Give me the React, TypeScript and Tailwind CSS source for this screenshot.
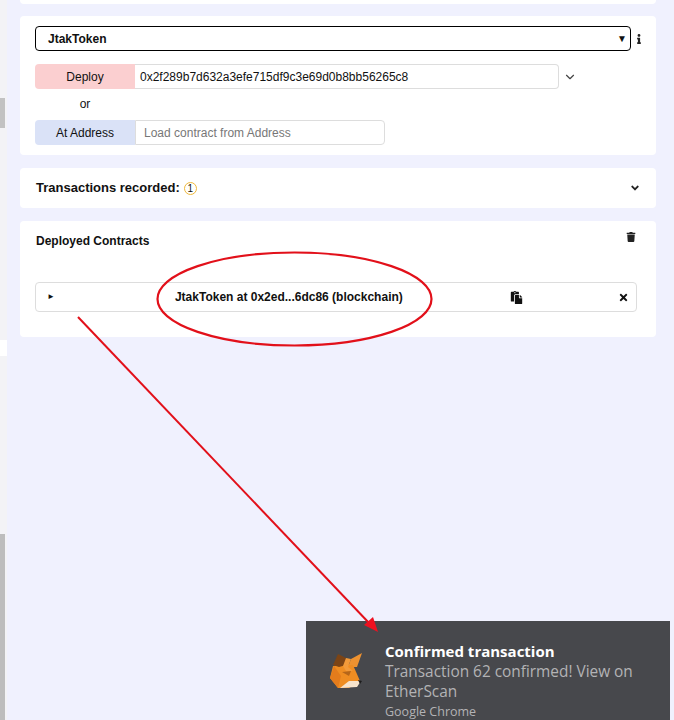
import { ChevronDown } from 'lucide-react';
import { FaAngleDown, FaInfo, FaPaste, FaTimes, FaTrash } from 'react-icons/fa';

function Fox() {
  return (
    <svg width="34" height="38" viewBox="0 0 34 38" className="shrink-0">
      <polygon points="33,2 22,8 19,16 28,16" fill="#ee9230" />
      <polygon points="4,15 16,14 24,14 31,30 20,37 9,37 1,27" fill="#ef8d22" />
      <polygon points="4,14 9,3 17,7 17,14 10,16" fill="#7c4415" />
      <polygon points="1,27 5,15 12,25 9,37" fill="#e47c1c" />
      <polygon points="17,7 22,8 19,16 24,20 17,20 14,15" fill="#f29a3a" />
      <polygon points="13,21 22,20 20,25" fill="#b5661a" />
      <polygon points="11,37 20,30 32,30 28,36" fill="#f6e3cc" />
      <polygon points="29,29 33,30 31,33" fill="#1c1c1c" />
    </svg>
  );
}

export default function App() {
  return (
    <div className="relative h-[720px] w-[674px] overflow-hidden bg-[#f0f1fe] font-['Liberation_Sans',Arial,sans-serif] text-[12px] text-[#111]">
      {/* Left edge of the next window */}
      <div className="absolute left-0 top-0 h-full w-[7px] bg-[#f3f3f6]">
        <div className="mt-[98px] h-[30px] w-[5px] bg-[#c2c2c2]" />
        <div className="mt-[212px] h-4 bg-white" />
        <div className="mt-[178px] h-[186px] w-[5px] bg-[#bdbdbd]" />
      </div>

      <div className="ml-5 flex w-[636px] flex-col">
        <div className="h-1 rounded-b bg-white" />

        {/* Contract select + deploy */}
        <section className="mt-3 h-[139px] rounded bg-white pl-[15px] pt-2.5">
          <div className="flex items-center">
            <div className="flex h-[25px] w-[596px] items-center justify-between rounded border border-black pl-[12px] pr-[3px] font-bold">
              <span>JtakToken</span>
              <span className="text-[10px] leading-none">▼</span>
            </div>
            <FaInfo size={10} className="ml-[3px] text-[#222]" />
          </div>

          <div className="mt-[13px] flex items-center">
            <button className="flex h-[25px] w-[100px] items-center justify-center rounded-l bg-[#fbcfd0]">Deploy</button>
            <div className="flex h-[25px] w-[424px] items-center rounded-r border border-l-0 border-[#ddd] pl-[5px]">
              0x2f289b7d632a3efe715df9c3e69d0b8bb56265c8
            </div>
            <ChevronDown size={14} strokeWidth={2} className="ml-1 text-[#444]" />
          </div>

          <div className="mt-[3px] h-[25px] w-[100px] text-center leading-[25px]">or</div>

          <div className="mt-[3px] flex items-center">
            <button className="flex h-[25px] w-[100px] items-center justify-center rounded-l bg-[#dae2f7]">At Address</button>
            <div className="flex h-[25px] w-[250px] items-center rounded-r border border-[#ddd] pl-2 text-[#777]">
              Load contract from Address
            </div>
          </div>
        </section>

        {/* Transactions */}
        <section className="mt-[13px] flex h-10 items-center justify-between rounded bg-white pl-4 pr-[15px]">
          <div className="flex items-center text-[13px] font-bold">
            Transactions recorded:
            <span className="ml-1 flex h-[13px] w-[13px] items-center justify-center rounded-full border border-[#f0b93a] text-[10px] font-normal">1</span>
          </div>
          <FaAngleDown size={12} className="text-[#222]" />
        </section>

        {/* Deployed contracts */}
        <section className="mt-[13px] h-[116px] rounded bg-white pl-[15px] pr-[19px] pt-[11px]">
          <div className="flex items-center justify-between">
            <span className="ml-px font-bold">Deployed Contracts</span>
            <FaTrash size={10} className="-mt-2 mr-px text-[#222]" />
          </div>
          <div className="mt-[32px] flex h-[30px] items-center rounded border border-[#ddd] pl-[11px] pr-[7px] font-bold">
            <span className="text-[8px] leading-none">►</span>
            <span className="ml-[120px]">JtakToken at 0x2ed...6dc86 (blockchain)</span>
            <FaPaste size={13} className="ml-[107px] text-[#111]" />
            <FaTimes size={11} className="ml-auto text-[#111]" />
          </div>
        </section>
      </div>

      {/* Chrome notification */}
      <div className="absolute left-[306px] top-[621px] flex h-[99px] w-[364px] bg-[#47484c] pl-[23px] pt-[30px]">
        <Fox />
        <div className="-mt-[10px] ml-[22px] font-['Open_Sans','Noto_Sans',sans-serif] text-[#b3b3b5]">
          <div className="text-[15px] font-bold leading-5 text-white">Confirmed transaction</div>
          <div className="mt-px w-[270px] text-[15.400px] leading-5">Transaction 62 confirmed! View on EtherScan</div>
          <div className="mt-[2px] text-[12.500px] leading-4">Google Chrome</div>
        </div>
      </div>

      {/* Hand-drawn annotation */}
      <svg className="absolute left-0 top-0" width="674" height="720" fill="none">
        <ellipse cx="294.500" cy="299" rx="137" ry="46.500" stroke="#e2101a" strokeWidth="2.200" />
        <path d="M78 317 L370 624" stroke="#e2101a" strokeWidth="2" />
        <polygon points="378,632 364,625 373,617" fill="#ee1020" />
      </svg>
    </div>
  );
}
